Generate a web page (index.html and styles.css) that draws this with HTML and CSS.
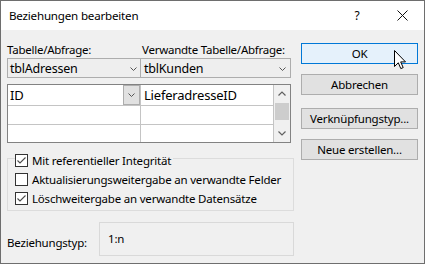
FILE: index.html
```html
<!DOCTYPE html>
<html lang="de">
<head>
<meta charset="utf-8">
<title>Beziehungen bearbeiten</title>
<link rel="stylesheet" href="styles.css">
</head>
<body>
<div class="window">
  <div class="titlebar">
    <span class="title">Beziehungen bearbeiten</span>
    <span class="help">?</span>
    <span class="close"><svg width="11" height="11" viewBox="0 0 11 11"><path d="M0.5 0.5 L10.5 10.5 M10.5 0.5 L0.5 10.5" stroke="#111" stroke-width="1" fill="none"/></svg></span>
  </div>
  <div class="body">
    <div class="left">
      <div class="labels">
        <span class="lbl lbl1">Tabelle/Abfrage:</span>
        <span class="lbl">Verwandte Tabelle/Abfrage:</span>
      </div>
      <div class="combos">
        <div class="combo c1"><span>tblAdressen</span><svg class="chev" width="7" height="4" viewBox="0 0 7 4"><polyline points="0.5,0.5 3.5,3.5 6.5,0.5" fill="none" stroke="#555" stroke-width="1"/></svg></div>
        <div class="combo c2"><span>tblKunden</span><svg class="chev" width="7" height="4" viewBox="0 0 7 4"><polyline points="0.5,0.5 3.5,3.5 6.5,0.5" fill="none" stroke="#555" stroke-width="1"/></svg></div>
      </div>
      <div class="grid">
        <div class="gcol gcol1">
          <div class="cell r1"><span>ID</span><span class="cellbtn"><svg width="7" height="4" viewBox="0 0 7 4"><polyline points="0.5,0.5 3.5,3.5 6.5,0.5" fill="none" stroke="#555" stroke-width="1"/></svg></span></div>
          <div class="cell r2"></div>
          <div class="cell r3"></div>
        </div>
        <div class="gcol gcol2">
          <div class="cell r1"><span>LieferadresseID</span></div>
          <div class="cell r2"></div>
          <div class="cell r3"></div>
        </div>
        <div class="scrollbar">
          <div class="sbtn"><svg width="8" height="5" viewBox="0 0 8 5"><polyline points="0.5,4.5 4,1 7.5,4.5" fill="none" stroke="#606060" stroke-width="1.2"/></svg></div>
          <div class="thumb"></div>
          <div class="sspace"></div>
          <div class="sbtn"><svg width="8" height="5" viewBox="0 0 8 5"><polyline points="0.5,0.5 4,4 7.5,0.5" fill="none" stroke="#606060" stroke-width="1.2"/></svg></div>
        </div>
      </div>
      <div class="group">
        <div class="check legend"><span class="box"><svg width="11" height="11" viewBox="0 0 11 11"><polyline points="1.5,5.5 4,8 9.5,2.5" fill="none" stroke="#4a4a4a" stroke-width="1.1"/></svg></span><span>Mit referentieller Integrität</span></div>
        <div class="check"><span class="box"></span><span>Aktualisierungsweitergabe an verwandte Felder</span></div>
        <div class="check"><span class="box"><svg width="11" height="11" viewBox="0 0 11 11"><polyline points="1.5,5.5 4,8 9.5,2.5" fill="none" stroke="#4a4a4a" stroke-width="1.1"/></svg></span><span>Löschweitergabe an verwandte Datensätze</span></div>
      </div>
      <div class="reltype">
        <span class="rellabel">Beziehungstyp:</span>
        <div class="relbox">1:n</div>
      </div>
    </div>
    <div class="buttons">
      <div class="btn btn-default">OK</div>
      <div class="btn btn-gap1">Abbrechen</div>
      <div class="btn btn-gap2">Verknüpfungstyp...</div>
      <div class="btn btn-gap1">Neue erstellen...</div>
    </div>
  </div>
  <svg class="cursor" width="13" height="20" viewBox="0 0 13 20"><path d="M0.5 0.5 L0.5 16.5 L4.3 12.8 L6.8 18.6 L9.2 17.6 L6.7 11.9 L11.5 11.9 Z" fill="#fff" stroke="#000" stroke-width="1" stroke-linejoin="miter"/></svg>
</div>
</body>
</html>
```
FILE: styles.css
```css
* { box-sizing: border-box; }
html, body { margin: 0; padding: 0; background: #f0f0f0; }
body {
  font-family: "Noto Sans", "Open Sans", sans-serif;
  font-size: 11.5px;
  letter-spacing: -0.2px;
  color: #000;
}
.window {
  position: relative;
  width: 425px;
  height: 264px;
  border: 1px solid #6e6e6e;
  background: #f0f0f0;
  display: flex;
  flex-direction: column;
  overflow: hidden;
}
.titlebar {
  flex: none;
  height: 29px;
  background: #fff;
  display: flex;
  align-items: center;
}
.title {
  flex: 1;
  padding-left: 8px;
  font-size: 11.6px;
  padding-bottom: 1px;
}
.help {
  width: 46px;
  text-align: center;
  font-size: 12px;
}
.close {
  width: 44px;
  display: flex;
  justify-content: center;
  align-items: center;
}
.body {
  flex: 1;
  display: flex;
  padding: 13px 6px 0 6px;
}
.left {
  width: 287px;
  margin-top: -1px;
}
.labels {
  display: flex;
  height: 16px;
  line-height: 16px;
  letter-spacing: -0.25px;
}
.lbl1 { width: 135px; }
.combos {
  display: flex;
  height: 20px;
  font-size: 12.5px;
}
.combo {
  display: flex;
  align-items: center;
  justify-content: space-between;
  border: 1px solid #adadad;
  background: #eeeeee;
  height: 20px;
}
.c1 { width: 134px; padding: 0 3px 0 2px; }
.c2 { width: 151px; margin-left: -1px; padding: 0 4px 0 3px; }
.chev { flex: none; margin-top: 1px; }
.grid {
  margin-top: 6px;
  width: 284px;
  height: 59px;
  border: 1px solid #828282;
  background: #fff;
  display: flex;
  font-size: 13px;
}
.gcol {
  width: 133px;
  border-right: 1px solid #c4c4c4;
  display: flex;
  flex-direction: column;
}
.cell {
  display: flex;
  align-items: center;
  border-bottom: 1px solid #c4c4c4;
}
.gcol1 .cell { padding-left: 2px; }
.gcol2 .cell { padding-left: 3px; }
.r1 { height: 21px; }
.r2 { height: 19px; }
.r3 { height: 17px; border-bottom: none; }
.cellbtn {
  margin-left: auto;
  width: 17px;
  height: 20px;
  border: 1px solid #adadad;
  background: #e1e1e1;
  display: flex;
  align-items: center;
  justify-content: center;
}
.scrollbar {
  width: 16px;
  background: #f0f0f0;
  display: flex;
  flex-direction: column;
}
.sbtn {
  height: 17px;
  display: flex;
  align-items: center;
  justify-content: center;
}
.thumb {
  height: 17px;
  margin: 1px 1px 0 1px;
  background: #cdcdcd;
}
.sspace { flex: 1; }
.group {
  margin-top: 15px;
  width: 287px;
  border: 1px solid #dcdcdc;
  padding: 0 0 2px 7px;
}
.check {
  display: flex;
  align-items: center;
  height: 19px;
}
.legend {
  width: fit-content;
  margin-top: -8px;
  padding-right: 2px;
  background: #f0f0f0;
}
.box {
  flex: none;
  width: 13px;
  height: 13px;
  border: 1px solid #333;
  background: #fff;
  margin-right: 4px;
  display: flex;
  align-items: center;
  justify-content: center;
}
.reltype {
  margin-top: 11px;
  display: flex;
  align-items: center;
}
.rellabel {
  width: 92px;
  padding-top: 6px;
}
.relbox {
  width: 195px;
  height: 34px;
  border: 1px solid #d9d9d9;
  padding-left: 8px;
  padding-bottom: 1px;
  display: flex;
  align-items: center;
}
.buttons {
  width: 117px;
  margin-left: 7px;
  display: flex;
  flex-direction: column;
}
.btn {
  height: 21px;
  border: 1px solid #adadad;
  background: #e1e1e1;
  display: flex;
  align-items: center;
  justify-content: center;
  padding-bottom: 1px;
}
.btn-default {
  border-color: #0078d7;
  background: #e5f1fb;
}
.btn-gap1 { margin-top: 10px; }
.btn-gap2 { margin-top: 13px; }
.cursor {
  position: absolute;
  left: 393px;
  top: 49px;
}
```
